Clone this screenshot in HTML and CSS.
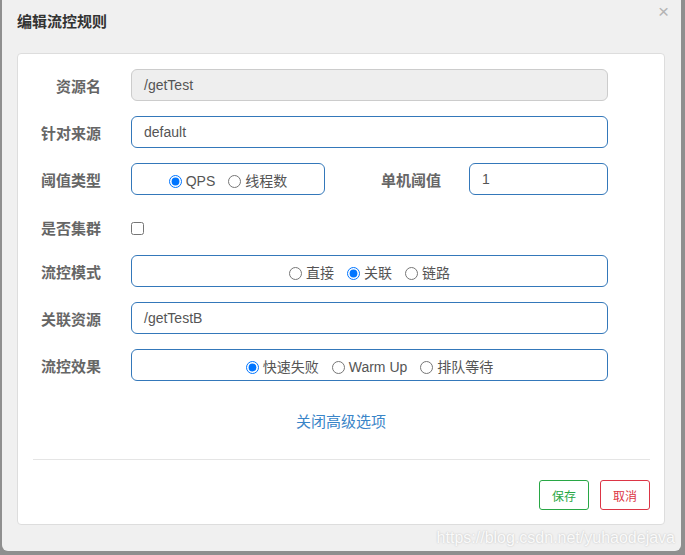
FILE: index.html
```html
<!DOCTYPE html>
<html lang="zh-CN">
<head>
<meta charset="utf-8">
<title>编辑流控规则</title>
<link rel="stylesheet" href="styles.css">
</head>
<body>
<div class="modal">
  <div class="header">
    <span class="title">编辑流控规则</span>
    <span class="close">×</span>
  </div>
  <div class="card">
    <div class="row">
      <label class="lbl">资源名</label>
      <div class="field wide disabled">/getTest</div>
    </div>
    <div class="row">
      <label class="lbl">针对来源</label>
      <div class="field wide">default</div>
    </div>
    <div class="row">
      <label class="lbl">阈值类型</label>
      <div class="field radios short">
        <label class="opt"><input type="radio" name="t" checked>QPS</label>
        <label class="opt"><input type="radio" name="t">线程数</label>
      </div>
      <label class="lbl lbl2">单机阈值</label>
      <div class="field small">1</div>
    </div>
    <div class="row check-row">
      <label class="lbl">是否集群</label>
      <input class="chk" type="checkbox">
    </div>
    <div class="row">
      <label class="lbl">流控模式</label>
      <div class="field radios wide">
        <label class="opt"><input type="radio" name="m">直接</label>
        <label class="opt"><input type="radio" name="m" checked>关联</label>
        <label class="opt"><input type="radio" name="m">链路</label>
      </div>
    </div>
    <div class="row">
      <label class="lbl">关联资源</label>
      <div class="field wide">/getTestB</div>
    </div>
    <div class="row">
      <label class="lbl">流控效果</label>
      <div class="field radios wide">
        <label class="opt"><input type="radio" name="e" checked>快速失败</label>
        <label class="opt"><input type="radio" name="e">Warm Up</label>
        <label class="opt"><input type="radio" name="e">排队等待</label>
      </div>
    </div>
    <div class="link-wrap"><a class="link">关闭高级选项</a></div>
    <div class="divider"></div>
    <div class="actions">
      <button class="btn save">保存</button>
      <button class="btn cancel">取消</button>
    </div>
  </div>
  <div class="watermark">https://blog.csdn.net/yuhaodejava</div>
</div>
</body>
</html>
```
FILE: styles.css
```css
html, body {
  margin: 0;
  padding: 0;
}
body {
  background: #8f8f8f;
  width: 685px;
  height: 555px;
  overflow: hidden;
  font-family: "Liberation Sans", "Noto Sans CJK SC", sans-serif;
}
.modal {
  position: relative;
  margin-left: 2px;
  width: 679px;
  height: 551px;
  background: #f0f0f0;
  border-radius: 0 0 6px 6px;
  box-sizing: border-box;
  padding: 0 0 0 15px;
}
.header {
  height: 53px;
  box-sizing: border-box;
  padding-top: 12px;
}
.title {
  font-size: 15px;
  line-height: 20px;
  font-weight: bold;
  color: #333;
}
.close {
  position: absolute;
  right: 12px;
  top: 0;
  font-size: 19px;
  line-height: 24px;
  color: #b4b4b4;
}
.card {
  width: 648px;
  height: 472px;
  box-sizing: border-box;
  background: #fff;
  border: 1px solid #ddd;
  border-radius: 4px;
  padding-top: 15px;
}
.row {
  display: flex;
  align-items: center;
  height: 32px;
  margin-bottom: 15px;
}
.lbl {
  width: 83px;
  margin-right: 30px;
  padding-top: 4px;
  text-align: right;
  font-size: 15px;
  font-weight: bold;
  color: #666;
  line-height: 20px;
}
.lbl2 {
  width: 116px;
  margin-right: 28px;
}
.field {
  height: 32px;
  box-sizing: border-box;
  border: 1px solid #3478ba;
  border-radius: 6px;
  padding-left: 12px;
  font-size: 14px;
  line-height: 30px;
  color: #555;
}
.wide { width: 477px; }
.short { width: 194px; }
.small { width: 139px; }
.disabled {
  background: #eee;
  border-color: #ccc;
}
.radios {
  display: flex;
  justify-content: center;
  align-items: center;
  padding-left: 0;
  padding-top: 4px;
  gap: 13px;
}
.opt {
  display: flex;
  align-items: center;
  font-size: 14px;
  line-height: 20px;
  color: #555;
}
.opt input {
  margin: 0 4px 0 0;
  width: 13px;
  height: 13px;
}
.check-row {
  height: 30px;
  padding-top: 6px;
  box-sizing: border-box;
}
.check-row .lbl {
  padding-top: 2px;
}
.chk {
  margin: 0;
  width: 13px;
  height: 13px;
}
.link-wrap {
  padding-top: 16px;
  text-align: center;
  height: 20px;
}
.link {
  font-size: 15px;
  line-height: 20px;
  color: #3a85c8;
}
.divider {
  height: 1px;
  background: #e5e5e5;
  margin: 27px 14px 0 15px;
}
.actions {
  display: flex;
  justify-content: flex-end;
  gap: 11px;
  margin: 20px 14px 0 15px;
}
.btn {
  width: 50px;
  height: 30px;
  padding: 0;
  background: #fff;
  border-radius: 3px;
  font-family: "Liberation Sans", "Noto Sans CJK SC", sans-serif;
  font-size: 12px;
}
.save {
  border: 1px solid #28a745;
  color: #28a745;
}
.cancel {
  border: 1px solid #dc3545;
  color: #dc3545;
}
.watermark {
  position: absolute;
  right: 6px;
  bottom: 3px;
  font-size: 16px;
  line-height: 20px;
  color: #fafafa;
  text-shadow: 0 0 2px rgba(0, 0, 0, 0.22);
}
```
